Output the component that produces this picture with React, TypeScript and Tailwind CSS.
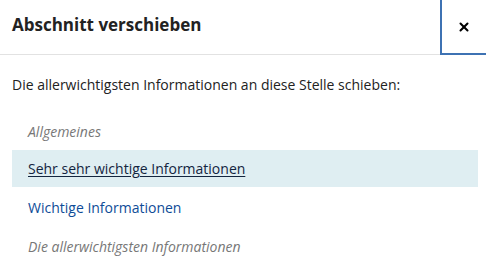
import { X } from "lucide-react";

const sections = [
  { label: "Allgemeines", state: "disabled" },
  { label: "Sehr sehr wichtige Informationen", state: "active" },
  { label: "Wichtige Informationen", state: "link" },
  { label: "Die allerwichtigsten Informationen", state: "disabled" },
];

export default function App() {
  return (
    <div className="w-[486px] h-[272px] bg-white font-['Open_Sans',sans-serif] text-[#222]">
      <div className="flex h-[55px] border-b border-[#e2e2e2]">
        <h2 className="flex-1 pl-3 pt-[12px] text-[17px] font-bold text-[#222]">
          Abschnitt verschieben
        </h2>
        <button className="w-[46px] h-[55px] -mb-px flex items-center justify-center border-l-2 border-b-2 border-[#3e72b3] bg-white">
          <X className="w-[14px] h-[14px] text-black" strokeWidth={3.5} />
        </button>
      </div>
      <p className="px-3 pt-[19px] text-[14px]">
        Die allerwichtigsten Informationen an diese Stelle schieben:
      </p>
      <ul className="mx-3 mt-[17px] w-[466px]">
        {sections.map((s) => (
          <li
            key={s.label}
            className={
              s.state === "active"
                ? "h-[37px] flex items-center pl-4 bg-[#dfeef2] text-[14px] text-[#13253f] underline underline-offset-2"
                : s.state === "link"
                ? "h-[40px] flex items-center pl-4 text-[14px] text-[#0e4c97]"
                : "h-[38px] flex items-center pl-4 text-[14px] italic text-[#777]"
            }
          >
            {s.label}
          </li>
        ))}
      </ul>
    </div>
  );
}
